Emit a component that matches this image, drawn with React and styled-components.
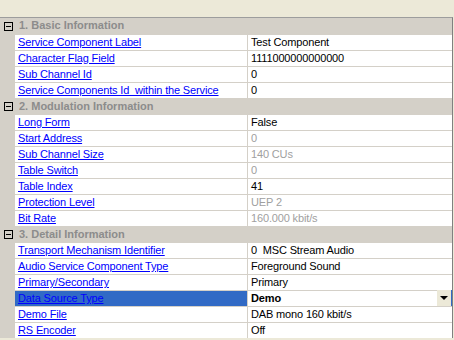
import React from "react";
import styled, { createGlobalStyle } from "styled-components";

const COLORS = {
  face: "#ECE9D8",
  gutter: "#D4D0C8",
  line: "#D4D0C8",
  frame: "#9D9D9D",
  link: "#0000FF",
  category: "#8C8C8C",
  disabled: "#A0A0A0",
  selected: "#316AC5",
};

const SECTIONS = [
  {
    title: "1. Basic Information",
    rows: [
      { name: "Service Component Label", value: "Test Component" },
      { name: "Character Flag Field", value: "1111000000000000" },
      { name: "Sub Channel Id", value: "0" },
      { name: "Service Components Id  within the Service", value: "0" },
    ],
  },
  {
    title: "2. Modulation Information",
    rows: [
      { name: "Long Form", value: "False" },
      { name: "Start Address", value: "0", disabled: true },
      { name: "Sub Channel Size", value: "140 CUs", disabled: true },
      { name: "Table Switch", value: "0", disabled: true },
      { name: "Table Index", value: "41" },
      { name: "Protection Level", value: "UEP 2", disabled: true },
      { name: "Bit Rate", value: "160.000 kbit/s", disabled: true },
    ],
  },
  {
    title: "3. Detail Information",
    rows: [
      { name: "Transport Mechanism Identifier", value: "0  MSC Stream Audio" },
      { name: "Audio Service Component Type", value: "Foreground Sound" },
      { name: "Primary/Secondary", value: "Primary" },
      { name: "Data Source Type", value: "Demo", selected: true },
      { name: "Demo File", value: "DAB mono 160 kbit/s" },
      { name: "RS Encoder", value: "Off" },
    ],
  },
];

const GlobalStyle = createGlobalStyle`
  html, body {
    margin: 0;
    background: ${COLORS.face};
  }
  * {
    box-sizing: border-box;
  }
`;

const App = () => {
  return (
    <Screen>
      <GlobalStyle />
      <Grid>
        {SECTIONS.map((section, i) => (
          <React.Fragment key={section.title}>
            <Category $first={i === 0}>
              <Gutter>
                <ToggleBox />
              </Gutter>
              <CategoryTitle>{section.title}</CategoryTitle>
            </Category>
            {section.rows.map((row) => (
              <Row key={row.name}>
                <Gutter />
                <NameCell $selected={row.selected}>
                  <Link>{row.name}</Link>
                </NameCell>
                <ValueCell $disabled={row.disabled} $selected={row.selected}>
                  {row.value}
                  {row.selected && (
                    <DropButton>
                      <Arrow />
                    </DropButton>
                  )}
                </ValueCell>
              </Row>
            ))}
          </React.Fragment>
        ))}
      </Grid>
    </Screen>
  );
};

const Screen = styled.div`
  width: 454px;
  height: 340px;
  padding-top: 17px;
  overflow: hidden;
  background: ${COLORS.face};
  font-family: Tahoma, "Liberation Sans", Arial, sans-serif;
  font-size: 11px;
  letter-spacing: -0.15px;
  -webkit-font-smoothing: none;
`;

const Grid = styled.div`
  width: 453px;
  border-top: 1px solid ${COLORS.frame};
  border-right: 1px solid #808080;
  background: ${COLORS.gutter};
`;

const Category = styled.div`
  display: grid;
  grid-template-columns: 15px 1fr;
  height: 16px;
  background: ${COLORS.gutter};
  border-top: ${(p) => (p.$first ? "none" : `1px solid ${COLORS.line}`)};
`;

const Gutter = styled.div`
  background: ${COLORS.gutter};
  display: flex;
  align-items: center;
  justify-content: center;
`;

const ToggleBox = styled.span`
  position: relative;
  width: 9px;
  height: 9px;
  border: 1px solid #000;
  margin-left: 1px;

  &::after {
    content: "";
    position: absolute;
    left: 1px;
    top: 3px;
    width: 5px;
    height: 1px;
    background: #000;
  }
`;

const CategoryTitle = styled.div`
  padding-left: 4px;
  line-height: 15px;
  font-weight: 700;
  letter-spacing: 0;
  color: ${COLORS.category};
  white-space: nowrap;
`;

const Row = styled.div`
  display: grid;
  grid-template-columns: 15px 233px 1fr;
  height: 16px;
`;

const NameCell = styled.div`
  border-top: 1px solid ${COLORS.line};
  border-right: 1px solid ${COLORS.line};
  background: ${(p) => (p.$selected ? COLORS.selected : "#fff")};
  padding-left: 3px;
  line-height: 15px;
  white-space: pre;
  overflow: hidden;
`;

const Link = styled.span`
  color: ${COLORS.link};
  text-decoration: underline;
`;

const ValueCell = styled.div`
  position: relative;
  border-top: 1px solid ${COLORS.line};
  background: #fff;
  padding-left: 3px;
  line-height: 15px;
  white-space: pre;
  color: ${(p) => (p.$disabled ? COLORS.disabled : "#000")};
  font-weight: ${(p) => (p.$selected ? 700 : 400)};
`;

const DropButton = styled.span`
  position: absolute;
  right: 0;
  top: -1px;
  width: 15px;
  height: 16px;
  background: ${COLORS.face};
  border-right: 1px solid ${COLORS.selected};
  display: flex;
  align-items: center;
  justify-content: center;
`;

const Arrow = styled.span`
  width: 0;
  height: 0;
  border-left: 4px solid transparent;
  border-right: 4px solid transparent;
  border-top: 4px solid #000;
`;

export default App;
